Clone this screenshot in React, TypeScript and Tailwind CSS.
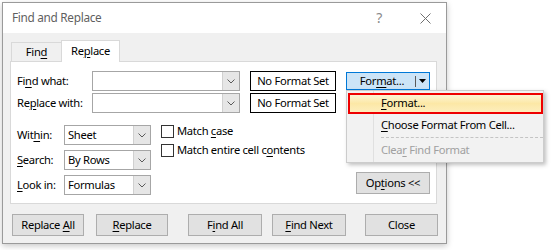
import React from 'react';

const U = ({ children }: { children: React.ReactNode }) => (
  <span className="underline decoration-1 underline-offset-[2px]">{children}</span>
);

const Chevron = () => (
  <svg width="8" height="5" viewBox="0 0 8 5">
    <polyline points="0.5,0.5 4,4 7.5,0.5" fill="none" stroke="#5a5a5a" strokeWidth="1" />
  </svg>
);

const Combo = ({ value, w }: { value?: string; w: string }) => (
  <div className={`flex h-[20px] ${w} border border-[#a6a6a6] bg-white`}>
    <div className="flex-1 pl-[3px] leading-[18px]">{value}</div>
    <div className="flex w-[17px] items-center justify-center border-l border-[#d0d0d0] bg-[#e6e6e6]">
      <Chevron />
    </div>
  </div>
);

const Btn = ({ children, className }: { children: React.ReactNode; className: string }) => (
  <div className={`flex h-[22px] items-center justify-center border border-[#adadad] bg-[#e1e1e1] ${className}`}>
    {children}
  </div>
);

export default function App() {
  return (
    <div className="relative h-[250px] w-[552px] overflow-hidden bg-white font-['Noto_Sans',sans-serif] text-[11.2px] tracking-[-0.3px] text-black">
      <div className="ml-[2px] mt-[2px] flex h-[242px] w-[445px] flex-col border border-[#9a9a9a] bg-[#f0f0f0] shadow-[0_2px_6px_rgba(0,0,0,0.22)]">
        {/* title bar */}
        <div className="flex h-[30px] items-center bg-white pl-[9px] text-[#5f5f5f]">
          <span className="text-[11.8px]">Find and Replace</span>
          <span className="ml-auto text-[14px] leading-none text-[#8a8a8a]">?</span>
          <svg className="ml-[38px] mr-[15px]" width="11" height="11" viewBox="0 0 11 11">
            <path d="M0.5 0.5 L10.5 10.5 M10.5 0.5 L0.5 10.5" stroke="#707070" strokeWidth="1" />
          </svg>
        </div>

        {/* tabs */}
        <div className="ml-[7px] mt-[7px] flex h-[21px] items-end">
          <div className="ml-[1px] flex h-[19px] w-[51px] items-center justify-center border border-b-0 border-[#d9d9d9]">
            Fin<U>d</U>
          </div>
          <div className="relative z-10 -mb-px -ml-px flex h-[22px] w-[59px] items-center justify-center border border-b-0 border-[#d9d9d9] bg-white">
            Re<U>p</U>lace
          </div>
        </div>

        {/* panel */}
        <div className="ml-[7px] h-[143px] w-[427px] border border-[#d9d9d9] bg-white pl-[6px] pr-[6px] pt-[9px]">
          <div className="flex h-[20px] items-center">
            <span className="w-[75px]">
              Fi<U>n</U>d what:
            </span>
            <Combo w="w-[148px]" />
            <div className="ml-[10px] flex h-[20px] w-[86px] items-center justify-center border border-black">
              No Format Set
            </div>
            <div className="ml-[10px] flex h-[18px] w-[84px] items-center border border-[#0078d7] bg-[#cce4f7]">
              <span className="flex-1 pl-[2px] text-center">
                For<U>m</U>at...
              </span>
              <span className="h-[11px] border-l border-[#5a5a5a]" />
              <svg className="mx-[3px]" width="7" height="4" viewBox="0 0 7 4">
                <path d="M0 0 L7 0 L3.5 4 Z" fill="#000" />
              </svg>
            </div>
          </div>
          <div className="mt-[2px] flex h-[20px] items-center">
            <span className="w-[75px]">
              Re<U>p</U>lace with:
            </span>
            <Combo w="w-[148px]" />
            <div className="ml-[10px] flex h-[20px] w-[86px] items-center justify-center border border-black">
              No Format Set
            </div>
          </div>

          <div className="mt-[12px] flex">
            <div className="flex flex-col gap-[5px]">
              <div className="flex h-[20px] items-center">
                <span className="w-[47px]">
                  Wit<U>h</U>in:
                </span>
                <Combo w="w-[87px]" value="Sheet" />
              </div>
              <div className="flex h-[20px] items-center">
                <span className="w-[47px]">
                  <U>S</U>earch:
                </span>
                <Combo w="w-[87px]" value="By Rows" />
              </div>
              <div className="flex h-[20px] items-center">
                <span className="w-[47px]">
                  <U>L</U>ook in:
                </span>
                <Combo w="w-[87px]" value="Formulas" />
              </div>
            </div>

            <div className="ml-[10px] flex flex-col gap-[6px]">
              <div className="flex h-[13px] items-center gap-[3px]">
                <span className="h-[13px] w-[13px] border border-[#333333] bg-white" />
                <span>
                  Match <U>c</U>ase
                </span>
              </div>
              <div className="flex h-[13px] items-center gap-[3px]">
                <span className="h-[13px] w-[13px] border border-[#333333] bg-white" />
                <span>
                  Match entire cell c<U>o</U>ntents
                </span>
              </div>
            </div>

            <Btn className="mb-px ml-auto h-[21px] w-[74px] self-end">
              <span>
                Op<U>t</U>ions &lt;&lt;
              </span>
            </Btn>
          </div>
        </div>

        {/* bottom buttons */}
        <div className="mt-[10px] flex">
          <Btn className="ml-[9px] w-[72px]">
            <span>
              Replace <U>A</U>ll
            </span>
          </Btn>
          <Btn className="ml-[12px] w-[72px]">
            <span>
              <U>R</U>eplace
            </span>
          </Btn>
          <Btn className="ml-[20px] w-[74px]">
            <span>
              F<U>i</U>nd All
            </span>
          </Btn>
          <Btn className="ml-[10px] w-[74px]">
            <span>
              <U>F</U>ind Next
            </span>
          </Btn>
          <Btn className="ml-[19px] w-[73px]">
            <span>Close</span>
          </Btn>
        </div>
      </div>

      {/* dropdown menu */}
      <div className="absolute left-[346px] top-[90px] h-[73px] w-[198px] border border-[#cccccc] bg-[#f2f2f2] pt-[2px] shadow-[2px_2px_4px_rgba(0,0,0,0.25)]">
        <div className="absolute bottom-0 left-[26px] top-0 border-l border-[#e0e0e0]" />
        <div className="relative z-10 ml-px flex h-[21px] w-[195px] items-center border-2 border-[#ee0000] bg-gradient-to-b from-[#fdf4d4] via-[#fce8a6] to-[#fdeebd] pl-[31px]">
          <span>
            <U>F</U>ormat...
          </span>
        </div>
        <div className="relative flex h-[22px] items-center pl-[34px]">
          <span>
            <U>C</U>hoose Format From Cell...
          </span>
        </div>
        <div className="relative ml-[34px] mt-[1px] border-t border-dashed border-[#c4c4c4]" />
        <div className="relative flex h-[24px] items-center pl-[34px] text-[#a0a0a0]">
          <span>
            Clea<U>r</U> Find Format
          </span>
        </div>
      </div>
    </div>
  );
}
